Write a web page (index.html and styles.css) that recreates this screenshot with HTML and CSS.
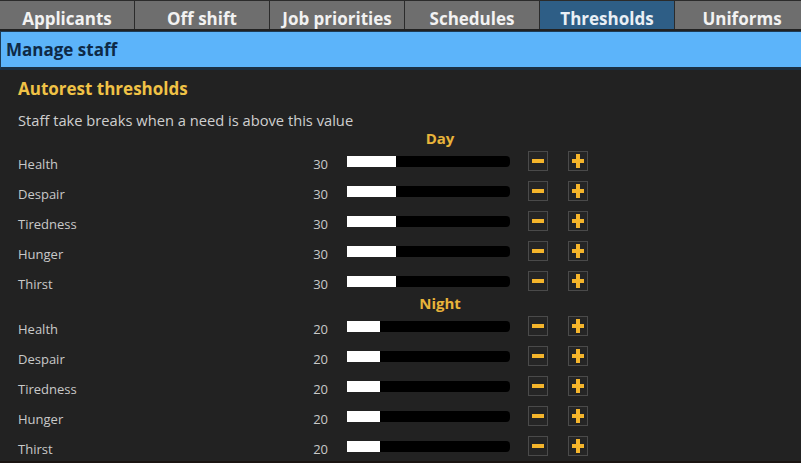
FILE: index.html
```html
<!DOCTYPE html>
<html>
<head>
<meta charset="utf-8">
<link rel="stylesheet" href="styles.css">
</head>
<body>
<div class="app">
  <div class="tabs">
    <div class="tab">Applicants</div>
    <div class="tab">Off shift</div>
    <div class="tab">Job priorities</div>
    <div class="tab">Schedules</div>
    <div class="tab active">Thresholds</div>
    <div class="tab">Uniforms</div>
  </div>
  <div class="titlebar">Manage staff</div>
  <div class="content">
    <h2 class="heading">Autorest thresholds</h2>
    <p class="desc">Staff take breaks when a need is above this value</p>

    <div class="group">Day</div>
    <div class="row"><span class="label">Health</span><span class="val">30</span><div class="bar"><div class="fill" style="width:30%"></div></div><button class="btn minus"><span></span></button><button class="btn plus"><span></span></button></div>
    <div class="row"><span class="label">Despair</span><span class="val">30</span><div class="bar"><div class="fill" style="width:30%"></div></div><button class="btn minus"><span></span></button><button class="btn plus"><span></span></button></div>
    <div class="row"><span class="label">Tiredness</span><span class="val">30</span><div class="bar"><div class="fill" style="width:30%"></div></div><button class="btn minus"><span></span></button><button class="btn plus"><span></span></button></div>
    <div class="row"><span class="label">Hunger</span><span class="val">30</span><div class="bar"><div class="fill" style="width:30%"></div></div><button class="btn minus"><span></span></button><button class="btn plus"><span></span></button></div>
    <div class="row"><span class="label">Thirst</span><span class="val">30</span><div class="bar"><div class="fill" style="width:30%"></div></div><button class="btn minus"><span></span></button><button class="btn plus"><span></span></button></div>

    <div class="group">Night</div>
    <div class="row"><span class="label">Health</span><span class="val">20</span><div class="bar"><div class="fill" style="width:20%"></div></div><button class="btn minus"><span></span></button><button class="btn plus"><span></span></button></div>
    <div class="row"><span class="label">Despair</span><span class="val">20</span><div class="bar"><div class="fill" style="width:20%"></div></div><button class="btn minus"><span></span></button><button class="btn plus"><span></span></button></div>
    <div class="row"><span class="label">Tiredness</span><span class="val">20</span><div class="bar"><div class="fill" style="width:20%"></div></div><button class="btn minus"><span></span></button><button class="btn plus"><span></span></button></div>
    <div class="row"><span class="label">Hunger</span><span class="val">20</span><div class="bar"><div class="fill" style="width:20%"></div></div><button class="btn minus"><span></span></button><button class="btn plus"><span></span></button></div>
    <div class="row"><span class="label">Thirst</span><span class="val">20</span><div class="bar"><div class="fill" style="width:20%"></div></div><button class="btn minus"><span></span></button><button class="btn plus"><span></span></button></div>
  </div>
</div>
</body>
</html>
```
FILE: styles.css
```css
html, body {
  margin: 0;
  padding: 0;
  background: #222222;
  overflow: hidden;
}
body {
  font-family: "Open Sans", "Noto Sans", sans-serif;
  width: 801px;
  height: 463px;
}
.app {
  display: flex;
  flex-direction: column;
  height: 463px;
  border-bottom: 2px solid #1a1512;
  box-sizing: border-box;
}
.tabs {
  display: flex;
  gap: 1px;
  background: #2b2b2b;
  padding-top: 1px;
  height: 29px;
  overflow: hidden;
}
.tab {
  flex: 0 0 134px;
  background: #6e6e6e;
  color: #f2f2f2;
  font-weight: 700;
  font-size: 17px;
  line-height: 29px;
  padding-top: 3px;
  box-sizing: border-box;
  text-align: center;
}
.tab.active {
  background: #2e5e86;
  color: #e9eff5;
}
.titlebar {
  margin-top: 2px;
  height: 35px;
  background: #5cb4fa;
  border: 1px solid #1d3b55;
  border-right: none;
  border-bottom: 3px solid #1a2f42;
  color: #0e2a47;
  font-weight: 700;
  font-size: 17px;
  line-height: 36px;
  padding-left: 5px;
}
.content {
  flex: 1;
  padding: 9px 0 0 18px;
}
.heading {
  margin: 0;
  font-size: 17px;
  line-height: 20px;
  font-weight: 700;
  color: #f0c246;
}
.desc {
  margin: 11px 0 0;
  font-size: 14.7px;
  line-height: 20px;
  color: #cfcfcf;
}
.group {
  display: flex;
  justify-content: center;
  padding-left: 61px;
  box-sizing: border-box;
  font-size: 15px;
  font-weight: 700;
  line-height: 15px;
  height: 15px;
  color: #e8b43a;
  margin-top: 1px;
}
.row + .group {
  margin-top: 0;
}
.row {
  display: flex;
  align-items: center;
  height: 30px;
}
.label {
  width: 280px;
  font-size: 13px;
  color: #c9c9c9;
  padding-top: 6px;
}
.val {
  width: 30px;
  text-align: right;
  font-size: 13px;
  color: #c9c9c9;
  padding-top: 6px;
}
.bar {
  margin-left: 19px;
  width: 163px;
  height: 11px;
  background: #000;
  border-radius: 0 4px 4px 0;
}
.fill {
  height: 100%;
  background: #ffffff;
}
.btn {
  margin: 0 0 0 18px;
  padding: 0;
  width: 20px;
  height: 20px;
  box-sizing: border-box;
  background: #252525;
  border: 1px solid #4a4a4a;
  position: relative;
}
.btn + .btn {
  margin-left: 20px;
}
.btn span {
  position: absolute;
  left: 3px;
  top: 7px;
  width: 12px;
  height: 4px;
  background: #f5b52b;
}
.plus span::after {
  content: "";
  position: absolute;
  left: 4px;
  top: -5px;
  width: 4px;
  height: 14px;
  background: #f5b52b;
}
```
